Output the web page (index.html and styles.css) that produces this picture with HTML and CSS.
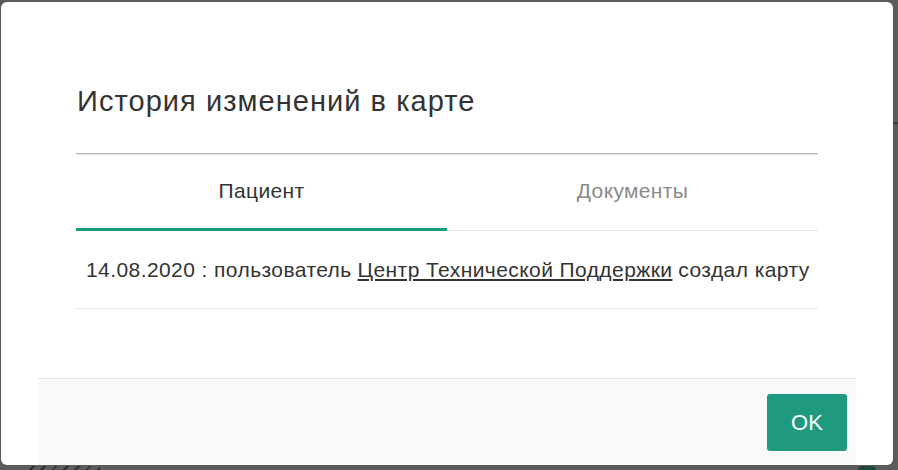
FILE: index.html
```html
<!DOCTYPE html>
<html lang="ru">
<head>
<meta charset="utf-8">
<title>История изменений в карте</title>
<link rel="stylesheet" href="styles.css">
</head>
<body>
<div class="backdrop">
  <div class="modal">
    <div class="modal-body">
      <h1 class="title">История изменений в карте</h1>
      <div class="tabs">
        <div class="tab active">Пациент</div>
        <div class="tab">Документы</div>
      </div>
      <div class="history-row">14.08.2020 : пользователь <a class="user-link" href="#">Центр Технической Поддержки</a> создал карту</div>
    </div>
    <div class="modal-footer">
      <button class="btn-ok">OK</button>
    </div>
  </div>
  <div class="edge-line"></div>
  <div class="edge-stripes"></div>
  <div class="edge-green"></div>
</div>
</body>
</html>
```

FILE: styles.css
```css
* { box-sizing: border-box; }
html, body { margin: 0; padding: 0; }
body {
  width: 898px;
  height: 470px;
  background: #5b5b5b;
  font-family: "Liberation Sans", Arial, sans-serif;
  color: #333;
  overflow: hidden;
}
.backdrop {
  position: relative;
  width: 898px;
  height: 470px;
  padding: 2px 0 0 1px;
}
.modal {
  position: relative;
  z-index: 1;
  width: 892px;
  height: 463px;
  background: #fff;
  border-radius: 6px;
  display: flex;
  flex-direction: column;
}
.modal-body {
  padding: 82px 75px 0 75px;
}
.title {
  margin: 0 0 0 1px;
  font-size: 29px;
  line-height: 34px;
  letter-spacing: 1.05px;
  font-weight: normal;
  color: #333;
}
.tabs {
  margin-top: 35px;
  display: flex;
  border-top: 1px solid #b4b4b4;
  box-shadow: inset 0 1px 0 #ececec;
  border-bottom: 1px solid #e2e2e2;
}
.tab {
  flex: 1;
  height: 77px;
  display: flex;
  align-items: center;
  justify-content: center;
  font-size: 21px;
  letter-spacing: 0.35px;
  color: #8a8a8a;
  border-bottom: 3px solid transparent;
  margin-bottom: -1px;
}
.tab.active {
  color: #333;
  border-bottom-color: #1f9a80;
}
.history-row {
  height: 78px;
  display: flex;
  align-items: center;
  padding-left: 10px;
  font-size: 21px;
  letter-spacing: 0.42px;
  border-bottom: 1px solid #e6e6e6;
  white-space: nowrap;
}
.history-row .user-link {
  color: #333;
  text-decoration: underline;
  margin: 0 0.28em;
}
.modal-footer {
  margin: auto 37px 0 37px;
  height: 87px;
  background: #f9f9f9;
  border-top: 1px solid #e6e6e6;
  display: flex;
  justify-content: flex-end;
  align-items: flex-start;
  padding: 15px 9px 0 0;
}
.btn-ok {
  width: 80px;
  height: 57px;
  border: none;
  border-radius: 3px;
  background: #1f9a80;
  color: #fff;
  font-family: "Liberation Sans", Arial, sans-serif;
  font-size: 22px;
  padding: 0;
}
.edge-line {
  position: absolute;
  right: 0;
  top: 122px;
  width: 6px;
  height: 2px;
  background: #3c3c3c;
}
.edge-stripes {
  position: absolute;
  left: 24px;
  bottom: 0;
  width: 76px;
  height: 4px;
  background: repeating-linear-gradient(135deg, #5b5b5b 0 6px, #2e2e2e 6px 8px);
}
.edge-green {
  position: absolute;
  left: 858px;
  bottom: 0;
  width: 18px;
  height: 4px;
  border-radius: 4px 4px 0 0;
  background: #1d4a3e;
}
```
